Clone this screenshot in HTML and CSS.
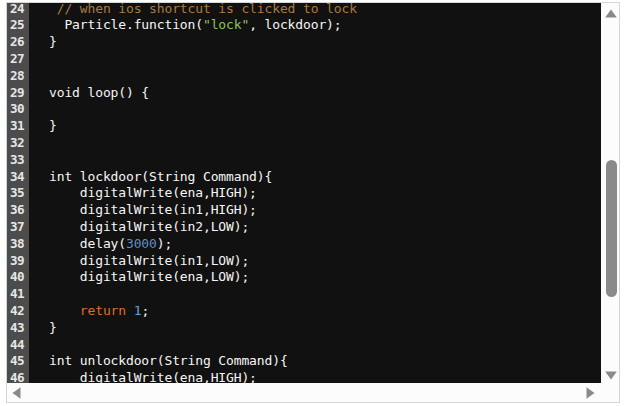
FILE: index.html
```
<!DOCTYPE html>
<html>
<head>
<meta charset="utf-8">
<link rel="stylesheet" href="styles.css">
</head>
<body>
<div class="frame">
  <div class="viewport">
    <div class="lines">
      <div class="row"><span class="ln">24</span><span class="code"> <span class="cm">// when ios shortcut is clicked to lock</span></span></div>
      <div class="row"><span class="ln">25</span><span class="code">  Particle.function(<span class="str">"lock"</span>, lockdoor);</span></div>
      <div class="row"><span class="ln">26</span><span class="code">}</span></div>
      <div class="row"><span class="ln">27</span><span class="code"></span></div>
      <div class="row"><span class="ln">28</span><span class="code"></span></div>
      <div class="row"><span class="ln">29</span><span class="code">void loop() {</span></div>
      <div class="row"><span class="ln">30</span><span class="code"></span></div>
      <div class="row"><span class="ln">31</span><span class="code">}</span></div>
      <div class="row"><span class="ln">32</span><span class="code"></span></div>
      <div class="row"><span class="ln">33</span><span class="code"></span></div>
      <div class="row"><span class="ln">34</span><span class="code">int lockdoor(String Command){</span></div>
      <div class="row"><span class="ln">35</span><span class="code">    digitalWrite(ena,HIGH);</span></div>
      <div class="row"><span class="ln">36</span><span class="code">    digitalWrite(in1,HIGH);</span></div>
      <div class="row"><span class="ln">37</span><span class="code">    digitalWrite(in2,LOW);</span></div>
      <div class="row"><span class="ln">38</span><span class="code">    delay(<span class="num2">3000</span>);</span></div>
      <div class="row"><span class="ln">39</span><span class="code">    digitalWrite(in1,LOW);</span></div>
      <div class="row"><span class="ln">40</span><span class="code">    digitalWrite(ena,LOW);</span></div>
      <div class="row"><span class="ln">41</span><span class="code"></span></div>
      <div class="row"><span class="ln">42</span><span class="code">    <span class="kw">return</span> <span class="num">1</span>;</span></div>
      <div class="row"><span class="ln">43</span><span class="code">}</span></div>
      <div class="row"><span class="ln">44</span><span class="code"></span></div>
      <div class="row"><span class="ln">45</span><span class="code">int unlockdoor(String Command){</span></div>
      <div class="row"><span class="ln">46</span><span class="code">    digitalWrite(ena,HIGH);</span></div>
      <div class="row"><span class="ln">47</span><span class="code">    digitalWrite(in1,LOW);</span></div>
    </div>
  </div>
  <div class="vbar">
    <svg class="arrow" width="12" height="9" viewBox="0 0 12 9"><polygon points="6,0.5 11.8,8.5 0.2,8.5" fill="#8a8a8a"/></svg>
    <div class="track"><div class="thumb"></div></div>
    <svg class="arrow" width="12" height="9" viewBox="0 0 12 9"><polygon points="0.2,0.5 11.8,0.5 6,8.5" fill="#8a8a8a"/></svg>
  </div>
  <div class="hbar">
    <svg class="harrow" width="9" height="12" viewBox="0 0 9 12"><polygon points="8.5,0.2 8.5,11.8 0.5,6" fill="#8a8a8a"/></svg>
    <svg class="harrow" width="9" height="12" viewBox="0 0 9 12"><polygon points="0.5,0.2 0.5,11.8 8.5,6" fill="#8a8a8a"/></svg>
  </div>
  <div class="corner"></div>
</div>
</body>
</html>
```

FILE: styles.css
```
html, body {
  margin: 0;
  padding: 0;
  background: #ffffff;
}

.frame {
  margin: 2px 0 0 6px;
  width: 612px;
  height: 399px;
  border: 1px solid #d6d6d6;
  display: grid;
  grid-template-columns: 594px 18px;
  grid-template-rows: 380px 19px;
  background: #fcfcfc;
}

.viewport {
  overflow: hidden;
  background: #111111;
}

.lines {
  margin-top: -2.4px;
}

.row {
  display: flex;
  height: 16.8px;
  line-height: 16.8px;
}

.ln {
  flex: 0 0 22px;
  box-sizing: border-box;
  padding-left: 3px;
  background: #4c4c4c;
  color: #e6e6e6;
  font-family: "DejaVu Sans Mono", monospace;
  font-weight: bold;
  font-size: 12.6px;
  letter-spacing: -0.5px;
}

.code {
  padding-left: 20px;
  white-space: pre;
  color: #f6f6f6;
  font-family: "DejaVu Sans Mono", monospace;
  font-size: 13px;
  letter-spacing: -0.13px;
}

.cm { color: #a87a45; }
.str { color: #8cc460; }
.kw { color: #dd6f2c; }
.num { color: #6c9fd8; }
.num2 { color: #5f8fc6; }

.vbar {
  display: flex;
  flex-direction: column;
  align-items: center;
  background: #fcfcfc;
}

.arrow {
  display: block;
  flex: 0 0 auto;
}

.vbar .arrow:first-child {
  margin-top: 6px;
  margin-left: 2px;
}

.vbar .arrow:last-child {
  margin-bottom: 3px;
  margin-left: 2px;
}

.track {
  flex: 1;
  width: 100%;
  display: flex;
  flex-direction: column;
  align-items: center;
  padding-top: 142px;
}

.thumb {
  width: 11px;
  height: 137px;
  margin-left: 2px;
  border-radius: 5.5px;
  background: #8a8a8a;
}

.hbar {
  display: flex;
  justify-content: space-between;
  align-items: center;
  padding: 0 6px 0 5px;
  background: #fcfcfc;
}

.harrow {
  display: block;
}

.corner {
  background: #fcfcfc;
}
```
